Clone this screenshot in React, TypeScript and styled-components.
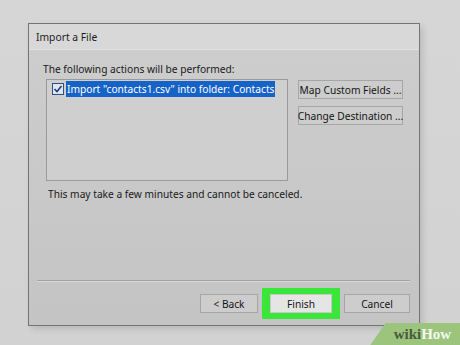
import React from "react";
import styled, { createGlobalStyle } from "styled-components";

const GlobalStyle = createGlobalStyle`
  html, body {
    margin: 0;
    padding: 0;
    background: #d3d3d3;
    font-family: "Noto Sans", "Open Sans", sans-serif;
  }
`;

const Screen = styled.div`
  position: relative;
  width: 460px;
  height: 345px;
  overflow: hidden;
  background: linear-gradient(180deg, #d6d6d6 0%, #d2d2d2 100%);
  padding: 23px 0 0 28px;
  box-sizing: border-box;
`;

const Dialog = styled.div`
  width: 392px;
  height: 303px;
  box-sizing: border-box;
  border: 1px solid #747474;
  background: #c9c9c9;
  box-shadow: 3px 3px 6px rgba(0, 0, 0, 0.12);
  display: flex;
  flex-direction: column;
`;

const TitleBar = styled.div`
  height: 25px;
  background: #d8d8d8;
  border-bottom: 1px solid #e2e2e2;
  display: flex;
  align-items: center;
  padding-left: 7px;
  font-size: 10.3px;
  color: #1c1c1c;
`;

const Body = styled.div`
  flex: 1;
  display: flex;
  flex-direction: column;
  padding: 12px 9px 0 14px;
  background: linear-gradient(180deg, #cdcdcd 0%, #c4c4c4 100%);
`;

const Label = styled.div`
  font-size: 10.2px;
  line-height: 14px;
  color: #1a1a1a;
  margin-bottom: 3px;
`;

const Row = styled.div`
  display: flex;
  gap: 10px;
  padding-left: 3px;
`;

const ListBox = styled.div`
  width: 242px;
  height: 102px;
  box-sizing: border-box;
  border: 1px solid #9a9a9a;
  background: #cfcfcf;
  padding: 0 0 0 5px;
`;

const Item = styled.div`
  display: flex;
  align-items: center;
  gap: 2px;
  height: 17px;
`;

const Check = styled.span`
  width: 12px;
  height: 12px;
  box-sizing: border-box;
  border: 1px solid #2b4f86;
  background: #dfe6f0;
  display: flex;
  align-items: center;
  justify-content: center;
`;

const Selected = styled.span`
  background: #1663c7;
  color: #ffffff;
  font-size: 10.2px;
  height: 16px;
  line-height: 16px;
  padding: 0 1px;
  white-space: nowrap;
`;

const SideButtons = styled.div`
  display: flex;
  flex-direction: column;
  gap: 7px;
  padding-top: 1px;
`;

const Button = styled.div<{ $width?: number; $light?: boolean }>`
  width: ${(p) => p.$width ?? 105}px;
  height: 19px;
  box-sizing: border-box;
  border: 1px solid ${(p) => (p.$light ? "#c9c9c9" : "#a6a6a6")};
  background: ${(p) => (p.$light ? "#e5e5e5" : "#cdcdcd")};
  display: flex;
  align-items: center;
  justify-content: center;
  font-size: 10.2px;
  color: #151515;
  white-space: nowrap;
`;

const Note = styled.div`
  font-size: 10.2px;
  line-height: 14px;
  color: #1a1a1a;
  margin: 6px 0 0 5px;
`;

const Separator = styled.div`
  margin: 79px 0 0 -6px;
  width: 373px;
  height: 1px;
  background: #a3a3a3;
  border-bottom: 1px solid #d8d8d8;
`;

const Footer = styled.div`
  display: flex;
  align-items: center;
  padding-left: 157px;
  margin-top: 6px;
`;

const Highlight = styled.div`
  margin: 0 4px;
  padding: 6px 8px;
  background: #39e639;
`;

const Watermark = styled.div`
  position: absolute;
  right: -14px;
  bottom: 0;
  width: 96px;
  height: 22px;
  background: #9cc47c;
  transform: skewX(-35deg);
  display: flex;
  align-items: center;
  justify-content: flex-start;
`;

const WatermarkText = styled.span`
  transform: skewX(35deg);
  font-family: "Liberation Serif", "DejaVu Serif", serif;
  font-weight: bold;
  font-size: 15px;
  margin-left: 16px;
  white-space: nowrap;
  color: #4a5a3c;
`;

const How = styled.span`
  color: #f4f8ef;
`;

export default function App() {
  return (
    <>
      <GlobalStyle />
      <Screen>
        <Dialog>
          <TitleBar>Import a File</TitleBar>
          <Body>
            <Label>The following actions will be performed:</Label>
            <Row>
              <ListBox>
                <Item>
                  <Check>
                    <svg width="10" height="10" viewBox="0 0 10 10">
                      <path d="M1.5 5 L4 7.5 L8.5 2" fill="none" stroke="#1d3f74" strokeWidth="1.6" />
                    </svg>
                  </Check>
                  <Selected>Import "contacts1.csv" into folder: Contacts</Selected>
                </Item>
              </ListBox>
              <SideButtons>
                <Button>Map Custom Fields ...</Button>
                <Button>Change Destination ...</Button>
              </SideButtons>
            </Row>
            <Note>This may take a few minutes and cannot be canceled.</Note>
            <Separator />
            <Footer>
              <Button $width={58}>&lt; Back</Button>
              <Highlight>
                <Button $width={62} $light>Finish</Button>
              </Highlight>
              <Button $width={66}>Cancel</Button>
            </Footer>
          </Body>
        </Dialog>
        <Watermark>
          <WatermarkText>
            wiki<How>How</How>
          </WatermarkText>
        </Watermark>
      </Screen>
    </>
  );
}
